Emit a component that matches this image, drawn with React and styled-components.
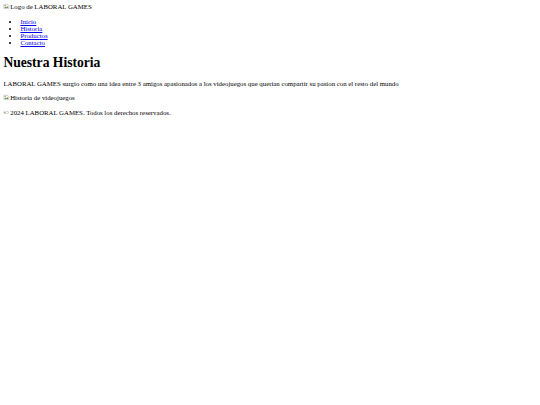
import React from "react";
import styled, { createGlobalStyle } from "styled-components";

const S = 0.425;
const px = (v) => `${(v * S).toFixed(3)}px`;

const Global = createGlobalStyle`
  html, body { background: #ffffff; }
  body {
    margin: ${px(8)};
    font-family: "Liberation Serif", "Times New Roman", serif;
    font-size: ${px(16)};
    color: #000000;
  }
`;

const Header = styled.header`
  display: block;
`;

const BrokenImage = styled.span`
  display: inline-flex;
  align-items: center;
  white-space: nowrap;
  color: #000000;
  svg {
    width: ${px(16)};
    height: ${px(16)};
    flex: none;
  }
`;

const NavList = styled.ul`
  margin: ${px(16)} 0;
  padding-left: ${px(40)};
  list-style: disc;
`;

const NavItem = styled.li`
  line-height: normal;
`;

const NavLink = styled.a`
  color: #0000ee;
  text-decoration: underline;
`;

const Title = styled.h1`
  font-size: ${px(32)};
  font-weight: bold;
  margin: ${px(21.44)} 0;
`;

const Paragraph = styled.p`
  margin: ${px(16)} 0;
`;

const Footer = styled.footer`
  display: block;
`;

function BrokenIcon() {
  return (
    <svg viewBox="0 0 16 16" aria-hidden="true">
      <path d="M2 3h9l3 3v7H2z" fill="#f4f4f4" stroke="#9a9a9a" strokeWidth="1" />
      <path d="M3 12l3-4 2 2 2-3 3 5z" fill="#6aa05a" />
      <circle cx="5" cy="6" r="1.2" fill="#d04040" />
    </svg>
  );
}

export default function App() {
  const links = ["Inicio", "Historia", "Productos", "Contacto"];
  return (
    <>
      <Global />
      <Header>
        <BrokenImage>
          <BrokenIcon />
          Logo de LABORAL GAMES
        </BrokenImage>
        <nav>
          <NavList>
            {links.map((l) => (
              <NavItem key={l}>
                <NavLink href="#">{l}</NavLink>
              </NavItem>
            ))}
          </NavList>
        </nav>
      </Header>
      <main>
        <section>
          <Title>Nuestra Historia</Title>
          <Paragraph>
            LABORAL GAMES surgio como una idea entre 3 amigos apasionados a los
            videojuegos que querian compartir su pasion con el resto del mundo
          </Paragraph>
          <Paragraph>
            <BrokenImage>
              <BrokenIcon />
              Historia de videojuegos
            </BrokenImage>
          </Paragraph>
        </section>
      </main>
      <Footer>
        <Paragraph>© 2024 LABORAL GAMES. Todos los derechos reservados.</Paragraph>
      </Footer>
    </>
  );
}
